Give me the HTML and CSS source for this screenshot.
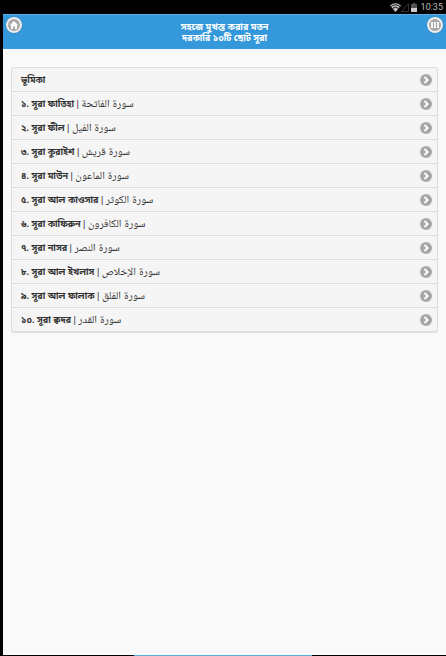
FILE: index.html
```html
<!DOCTYPE html>
<html lang="bn">
<head>
    <meta charset="UTF-8">
    <meta name="viewport" content="width=device-width, initial-scale=1">
    <title>১০টি ছোট সূরা</title>
    <link rel="stylesheet" href="styles.css">
</head>

<body>
    <svg class="symbols" aria-hidden="true">
        <symbol id="arrow" viewBox="0 0 12 12">
            <circle cx="6" cy="6" r="6" fill="#a8a8a8"/>
            <path d="M4.500 3l3 3-3 3" fill="none" stroke="#fff" stroke-width="1.9"/>
        </symbol>
    </svg>

    <div class="status-bar">
        <svg class="wifi" width="11" height="9" viewBox="0 0 11 9">
            <path d="M0 2.500Q5.500-2 11 2.500L5.500 9z" fill="#c4c4c4"/>
            <path d="M1 3.600q4.500-3.400 9 0M2.500 5.400q3-2.300 6 0" fill="none" stroke="#111" stroke-width="1"/>
        </svg>
        <svg class="signal" width="8" height="9" viewBox="0 0 8 9">
            <path d="M.5 8.500h7v-8z" fill="none" stroke="#333"/>
        </svg>
        <svg class="battery" width="6" height="9" viewBox="0 0 6 9">
            <path d="M2 0h2v1h2v4H0V1h2z" fill="#555"/>
            <path d="M0 5h6v4H0z" fill="#ccc"/>
        </svg>
        <span class="clock">10:35</span>
    </div>

    <div class="page">
        <header class="header">
            <a class="round-btn" href="#home" aria-label="Home">
                <svg width="12" height="12" viewBox="0 0 12 12">
                    <circle cx="6" cy="6" r="6" fill="#a8a8a8"/>
                    <path d="M6 2l4 4H9v4H7V7.500H5V10H3V6H2z" fill="#fff"/>
                </svg>
            </a>
            <h1>সহজে মুখস্ত করার মতন<br>দরকারি ১০টি ছোট সূরা</h1>
            <a class="round-btn" href="#menu" aria-label="Menu">
                <svg width="12" height="12" viewBox="0 0 12 12">
                    <circle cx="6" cy="6" r="6" fill="#a8a8a8"/>
                    <path d="M2 3h2v6H2zM5 3h2v6H5zM8 3h2v6H8z" fill="#fff"/>
                    <path d="M2 5h8M2 7h8" stroke="#a8a8a8" stroke-width=".3"/>
                </svg>
            </a>
        </header>

        <main class="content">
            <ul class="sura-list">
                <li><a href="#intro"><span><b>ভূমিকা</b></span><svg class="arrow"><use href="#arrow"/></svg></a></li>
                <li><a href="#sura-1"><span><b>১. সূরা ফাতিহা</b> | <bdi lang="ar">سورة الفاتحة</bdi></span><svg class="arrow"><use href="#arrow"/></svg></a></li>
                <li><a href="#sura-2"><span><b>২. সূরা ফীল</b> | <bdi lang="ar">سورة الفيل</bdi></span><svg class="arrow"><use href="#arrow"/></svg></a></li>
                <li><a href="#sura-3"><span><b>৩. সূরা কুরাইশ</b> | <bdi lang="ar">سورة قريش</bdi></span><svg class="arrow"><use href="#arrow"/></svg></a></li>
                <li><a href="#sura-4"><span><b>৪. সূরা মাউন</b> | <bdi lang="ar">سورة الماعون</bdi></span><svg class="arrow"><use href="#arrow"/></svg></a></li>
                <li><a href="#sura-5"><span><b>৫. সূরা আল কাওসার</b> | <bdi lang="ar">سورة الكوثر</bdi></span><svg class="arrow"><use href="#arrow"/></svg></a></li>
                <li><a href="#sura-6"><span><b>৬. সূরা কাফিরুন</b> | <bdi lang="ar">سورة الكافرون</bdi></span><svg class="arrow"><use href="#arrow"/></svg></a></li>
                <li><a href="#sura-7"><span><b>৭. সূরা নাসর</b> | <bdi lang="ar">سورة النصر</bdi></span><svg class="arrow"><use href="#arrow"/></svg></a></li>
                <li><a href="#sura-8"><span><b>৮. সূরা আল ইখলাস</b> | <bdi lang="ar">سورة الإخلاص</bdi></span><svg class="arrow"><use href="#arrow"/></svg></a></li>
                <li><a href="#sura-9"><span><b>৯. সূরা আল ফালাক</b> | <bdi lang="ar">سورة الفلق</bdi></span><svg class="arrow"><use href="#arrow"/></svg></a></li>
                <li><a href="#sura-10"><span><b>১০. সূরা ক্বদর</b> | <bdi lang="ar">سورة القدر</bdi></span><svg class="arrow"><use href="#arrow"/></svg></a></li>
            </ul>
        </main>
    </div>

    <div class="bottom-line"></div>
</body>
</html>
```

FILE: styles.css
```css
:root {
    --blue: #3498db;
    --page: #f9f9f9;
    --row: #f5f5f5;
    --line: #dddddd;
    --text: #333333;
}

* {
    box-sizing: border-box;
}

body {
    margin: 0;
    min-height: 100vh;
    display: flex;
    flex-direction: column;
    background: #000;
    color: var(--text);
    font-family: "Liberation Sans", "Noto Sans Bengali", "Noto Naskh Arabic", "Noto Sans Arabic", sans-serif;
    font-size: 9px;
}

.symbols {
    display: none;
}

/* Status bar */
.status-bar {
    display: flex;
    justify-content: flex-end;
    align-items: center;
    height: 14px;
    padding-right: 3px;
}

.battery {
    margin: 0 4px 0 2px;
}

.clock {
    color: #bbb;
    font-family: Roboto, sans-serif;
    font-size: 9px;
    line-height: 14px;
}

/* Page */
.page {
    flex: 1;
    margin-left: 3px;
    background: var(--page);
}

.header {
    display: flex;
    justify-content: space-between;
    height: 35px;
    padding: 2px 3px;
    background: var(--blue);
    border-top: 1px solid #5dade2;
}

.header h1 {
    margin: 5px 0 0;
    color: #fff;
    font-size: 9px;
    font-weight: 700;
    line-height: 11px;
    text-align: center;
}

.round-btn {
    display: flex;
    align-items: center;
    justify-content: center;
    width: 16px;
    height: 16px;
    border-radius: 50%;
    background: #eee;
    box-shadow: 0 0 1px rgba(0, 0, 0, 0.4);
}

/* Sura list */
.content {
    padding: 18px 8px;
}

.sura-list {
    margin: 0;
    padding: 0;
    list-style: none;
    background: var(--row);
    border: 1px solid var(--line);
    border-radius: 3px;
    box-shadow: 0 1px 1px rgba(0, 0, 0, 0.1);
}

.sura-list li + li {
    border-top: 1px solid var(--line);
}

.sura-list a {
    display: flex;
    align-items: center;
    justify-content: space-between;
    height: 23px;
    padding: 0 5px 0 9px;
    color: var(--text);
    text-decoration: none;
    line-height: 24px;
    white-space: nowrap;
}

.sura-list bdi {
    font-size: 11px;
    line-height: 1;
}

.arrow {
    width: 12px;
    height: 12px;
}

/* Bottom edge */
.bottom-line {
    width: 40%;
    height: 1px;
    margin: 0 auto;
    background: #5dade2;
}
```
